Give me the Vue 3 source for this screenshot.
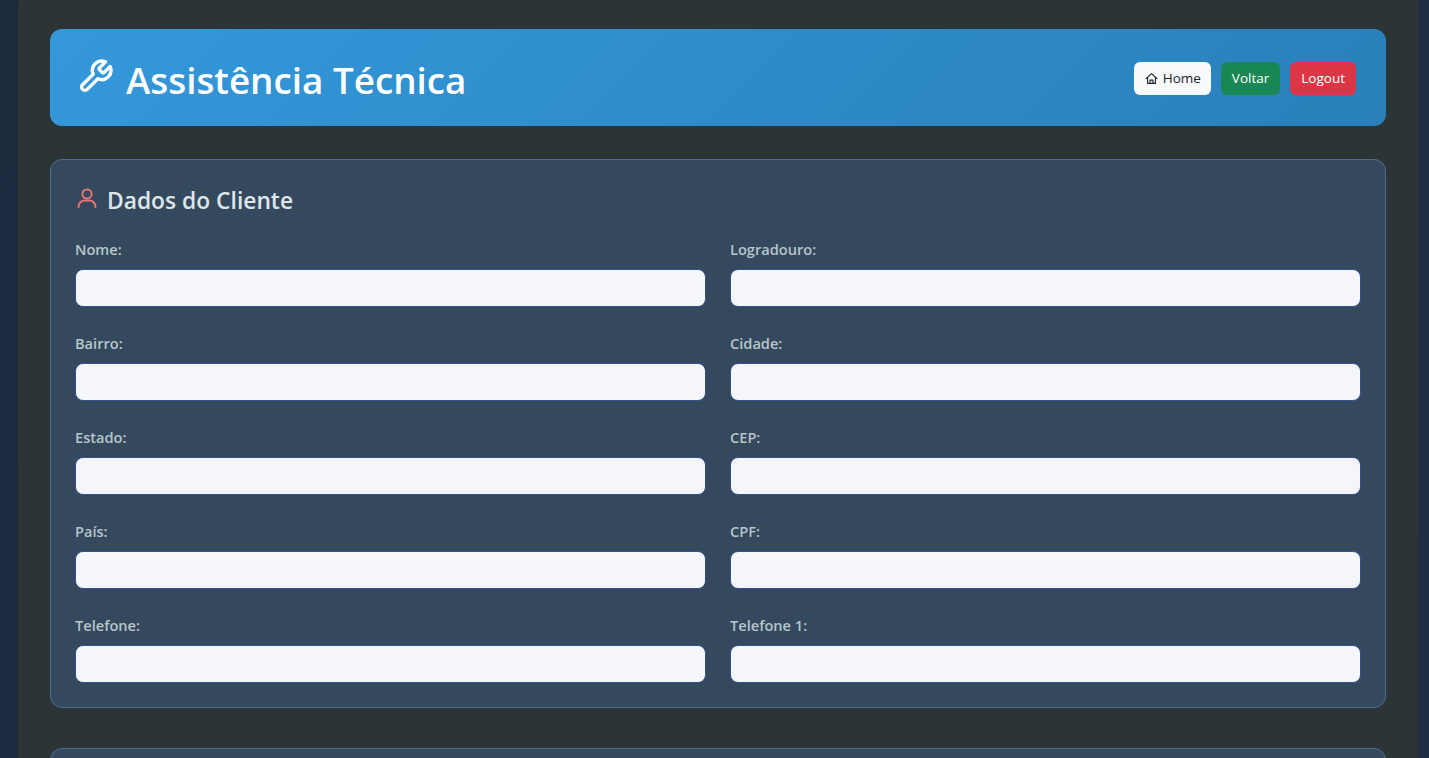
<script setup>
const fields = ['Nome:', 'Logradouro:', 'Bairro:', 'Cidade:', 'Estado:', 'CEP:', 'País:', 'CPF:', 'Telefone:', 'Telefone 1:']
</script>

<template>
  <div class="page">
    <main class="shell">
      <header class="hero">
        <h1 class="title">
          <svg class="wrench" viewBox="0 0 24 24" fill="none" stroke="currentColor" stroke-width="2.2" stroke-linecap="round" stroke-linejoin="round">
            <path d="M14.7 6.3a1 1 0 0 0 0 1.4l1.6 1.6a1 1 0 0 0 1.4 0l3.77-3.77a6 6 0 0 1-7.94 7.94l-6.91 6.91a2.12 2.12 0 0 1-3-3l6.91-6.91a6 6 0 0 1 7.94-7.94l-3.76 3.76z" />
          </svg>
          <span class="title-text">Assistência Técnica</span>
        </h1>
        <nav class="actions">
          <a class="btn light">
            <svg class="house" viewBox="0 0 16 16" fill="none" stroke="currentColor" stroke-width="1.4" stroke-linejoin="round" stroke-linecap="round">
              <path d="M1.5 8 8 2l6.5 6" />
              <path d="M3.2 6.8V14h9.6V6.8" />
              <path d="M6.2 14v-4h3.6v4" />
            </svg>
            Home
          </a>
          <a class="btn green">Voltar</a>
          <a class="btn red">Logout</a>
        </nav>
      </header>

      <section class="card">
        <h2 class="card-title">
          <svg class="person" viewBox="0 0 20 20" fill="none" stroke="currentColor" stroke-width="2" stroke-linecap="round">
            <circle cx="10" cy="6" r="4.6" />
            <path d="M1.5 19c0-4 3-6.5 6-6.5h5c3 0 6 2.500 6 6.500" />
          </svg>
          <span>Dados do Cliente</span>
        </h2>
        <div class="grid">
          <div v-for="f in fields" :key="f" class="field">
            <label class="label">{{ f }}</label>
            <input class="input" type="text" />
          </div>
        </div>
      </section>

      <section class="card next"></section>
    </main>
  </div>
</template>

<style>
html, body { margin: 0; height: 100%; overflow: hidden; background: #1e2d42; }
</style>

<style scoped>
.page {
  height: 758px;
  overflow: hidden;
  padding: 0 11px 0 18px;
  box-sizing: border-box;
  background: linear-gradient(135deg, #1c2a3e, #1f2e45);
  font-family: "Open Sans", "Noto Sans", sans-serif;
}
.shell {
  margin-top: -10px;
  padding: 39px 32px 32px;
  background: #2d3436;
  border-radius: 15px;
}
.hero {
  height: 97px;
  box-sizing: border-box;
  padding: 1px 30px 0 27px;
  display: flex;
  align-items: center;
  justify-content: space-between;
  border-radius: 12px;
  background: linear-gradient(135deg, #3498db, #2980b9);
}
.title {
  margin: 0;
  display: flex;
  align-items: center;
  gap: 12px;
  color: #fff;
  font-size: 36.8px;
  font-weight: 600;
  line-height: 1.2;
}
.title-text { margin-top: 4px; }
.wrench { width: 37px; height: 37px; margin-top: -4px; }
.actions { display: flex; gap: 10px; }
.btn {
  height: 33px;
  box-sizing: border-box;
  padding: 0 11px;
  display: flex;
  align-items: center;
  gap: 5px;
  border-radius: 6px;
  font-size: 13.5px;
  color: #fff;
}
.light { padding-right: 10px; background: #f8f9fa; color: #212529; }
.green { background: #198754; }
.red { background: #dc3545; }
.house { width: 13px; height: 13px; }
.card {
  margin-top: 33px;
  padding: 24px;
  background: #34495e;
  border: 1px solid #4b6e91;
  border-radius: 12px;
}
.next { margin-top: 40px; height: 200px; }
.card-title {
  margin: 2px 0 23px;
  display: flex;
  align-items: center;
  gap: 10px;
  color: #dfe6e9;
  font-size: 22.8px;
  font-weight: 600;
  line-height: 30px;
}
.person { width: 20px; height: 20px; color: #e57373; margin: -7px 0 0 2px; }
.grid {
  display: grid;
  grid-template-columns: 1fr 1fr;
  column-gap: 24px;
  row-gap: 26px;
}
.field { display: flex; flex-direction: column; }
.label {
  margin-bottom: 10px;
  color: #b8c5ca;
  font-size: 14.6px;
  font-weight: 600;
  line-height: 20px;
}
.input {
  height: 38px;
  box-sizing: border-box;
  padding: 0 12px;
  background: #f5f6fa;
  border: 1px solid #34508f;
  border-radius: 8px;
  outline: none;
}
</style>
